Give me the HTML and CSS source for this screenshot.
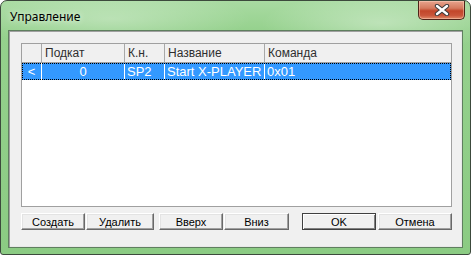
FILE: index.html
```html
<!DOCTYPE html>
<html lang="ru">
<head>
    <meta charset="UTF-8">
    <title>Управление</title>
    <link rel="stylesheet" href="styles.css">
</head>
<body>
    <div class="window">
        <div class="titlebar">
            <span class="title">Управление</span>
            <div class="close-btn">
                <svg width="16" height="12" viewBox="0 0 16 12">
                    <path d="M3 2 L13 10 M13 2 L3 10" stroke="#3a3a3a" stroke-width="4.4" stroke-linecap="round"/>
                    <path d="M3 2 L13 10 M13 2 L3 10" stroke="#fff" stroke-width="2.4" stroke-linecap="round"/>
                </svg>
            </div>
        </div>
        <div class="client">
            <div class="list">
                <div class="list-header">
                    <div class="hcell"></div>
                    <div class="hcell">Подкат</div>
                    <div class="hcell">К.н.</div>
                    <div class="hcell">Название</div>
                    <div class="hcell">Команда</div>
                </div>
                <div class="list-row selected">
                    <div class="cell center">&lt;</div>
                    <div class="cell center">0</div>
                    <div class="cell">SP2</div>
                    <div class="cell">Start X-PLAYER</div>
                    <div class="cell">0x01</div>
                </div>
            </div>
            <div class="buttons">
                <button class="btn w64">Создать</button>
                <button class="btn w68">Удалить</button>
                <button class="btn w64 gap-left">Вверх</button>
                <button class="btn w65">Вниз</button>
                <button class="btn w74 default-btn">OK</button>
                <button class="btn w74 ok-gap">Отмена</button>
            </div>
        </div>
    </div>
</body>
</html>
```

FILE: styles.css
```css
body {
    margin: 0;
    background: #fff;
    width: 473px;
    height: 257px;
    overflow: hidden;
}
.window {
    width: 471px;
    height: 255px;
    box-sizing: border-box;
    border: 1px solid #3c4a3c;
    border-radius: 7px 7px 3px 3px;
    background:
        radial-gradient(ellipse 120px 30px at 380px 22px, rgba(255,255,255,0.35), rgba(255,255,255,0) 100%),
        radial-gradient(ellipse 140px 30px at 110px 18px, rgba(255,255,255,0.3), rgba(255,255,255,0) 100%),
        linear-gradient(to bottom, #a9dba2 0, #95d18d 30px, #8bcb83 100%);
    display: flex;
    flex-direction: column;
}
.titlebar {
    height: 29px;
    display: flex;
    align-items: flex-start;
    justify-content: space-between;
    padding-left: 9px;
    padding-right: 5px;
}
.title {
    font-family: "Noto Sans", "Open Sans", sans-serif;
    font-size: 12px;
    color: #000;
    margin-top: 7px;
    text-shadow: 0 0 6px rgba(255,255,255,0.9);
}
.close-btn {
    width: 47px;
    height: 19px;
    box-sizing: border-box;
    border: 1px solid #4e2318;
    border-top: none;
    border-radius: 0 0 5px 5px;
    background: linear-gradient(to bottom, #e8a48e 0, #d57a5e 40%, #c2462a 55%, #c9553a 80%, #e08a68 100%);
    display: flex;
    align-items: center;
    justify-content: center;
    box-shadow: inset 0 0 0 1px rgba(255,220,200,0.45);
}
.client {
    margin: 0 7px 0 7px;
    height: 218px;
    box-sizing: border-box;
    border: 1px solid #5f7f5f;
    box-shadow: inset 1px 1px 0 #a0a0a0, inset -1px -1px 0 #e8e8e8;
    background: #f0f0f0;
    padding: 12px 0 0 12px;
    display: flex;
    flex-direction: column;
}
.list {
    width: 431px;
    height: 164px;
    box-sizing: border-box;
    border: 1px solid #a0a0a0;
    background: #fff;
}
.list-header,
.list-row {
    display: grid;
    grid-template-columns: 20px 83px 40px 100px 1fr;
}
.list-header {
    height: 19px;
    box-sizing: border-box;
    border-bottom: 1px solid #a0a0a0;
    background: #f0f0f0;
}
.hcell {
    font-family: "Liberation Sans", Arial, sans-serif;
    font-size: 12px;
    color: #2e2e2e;
    line-height: 18px;
    padding-left: 3px;
    border-right: 1px solid #a8a8a8;
}
.hcell:last-child {
    border-right: none;
}
.list-row {
    height: 17px;
}
.list-row.selected {
    background: #3399ff;
    outline: 1px dotted #000;
    outline-offset: -1px;
}
.cell {
    font-family: "Liberation Sans", Arial, sans-serif;
    font-size: 13px;
    color: #fff;
    line-height: 17px;
    padding-left: 2px;
    border-right: 1px solid #fff;
    white-space: nowrap;
    overflow: hidden;
}
.cell:last-child {
    border-right: none;
}
.cell.center {
    text-align: center;
    padding-left: 0;
}
.buttons {
    display: flex;
    margin-top: 6px;
}
.btn {
    height: 17px;
    box-sizing: border-box;
    padding: 0;
    background: #f0f0f0;
    border: 1px solid;
    border-color: #fff #696969 #696969 #fff;
    box-shadow: inset -1px -1px 0 #a0a0a0, inset 1px 1px 0 #e3e3e3;
    font-family: "Liberation Sans", Arial, sans-serif;
    font-size: 11px;
    color: #000;
    line-height: 14px;
}
.w64 { width: 64px; }
.w65 { width: 65px; margin-left: 1px; }
.w68 { width: 68px; margin-left: 1px; }
.w74 { width: 74px; }
.gap-left { margin-left: 5px; }
.default-btn {
    margin-left: 13px;
    border-color: #404040;
    box-shadow: inset 1px 1px 0 #fff, inset -1px -1px 0 #808080;
}
.ok-gap { margin-left: 2px; }
```
